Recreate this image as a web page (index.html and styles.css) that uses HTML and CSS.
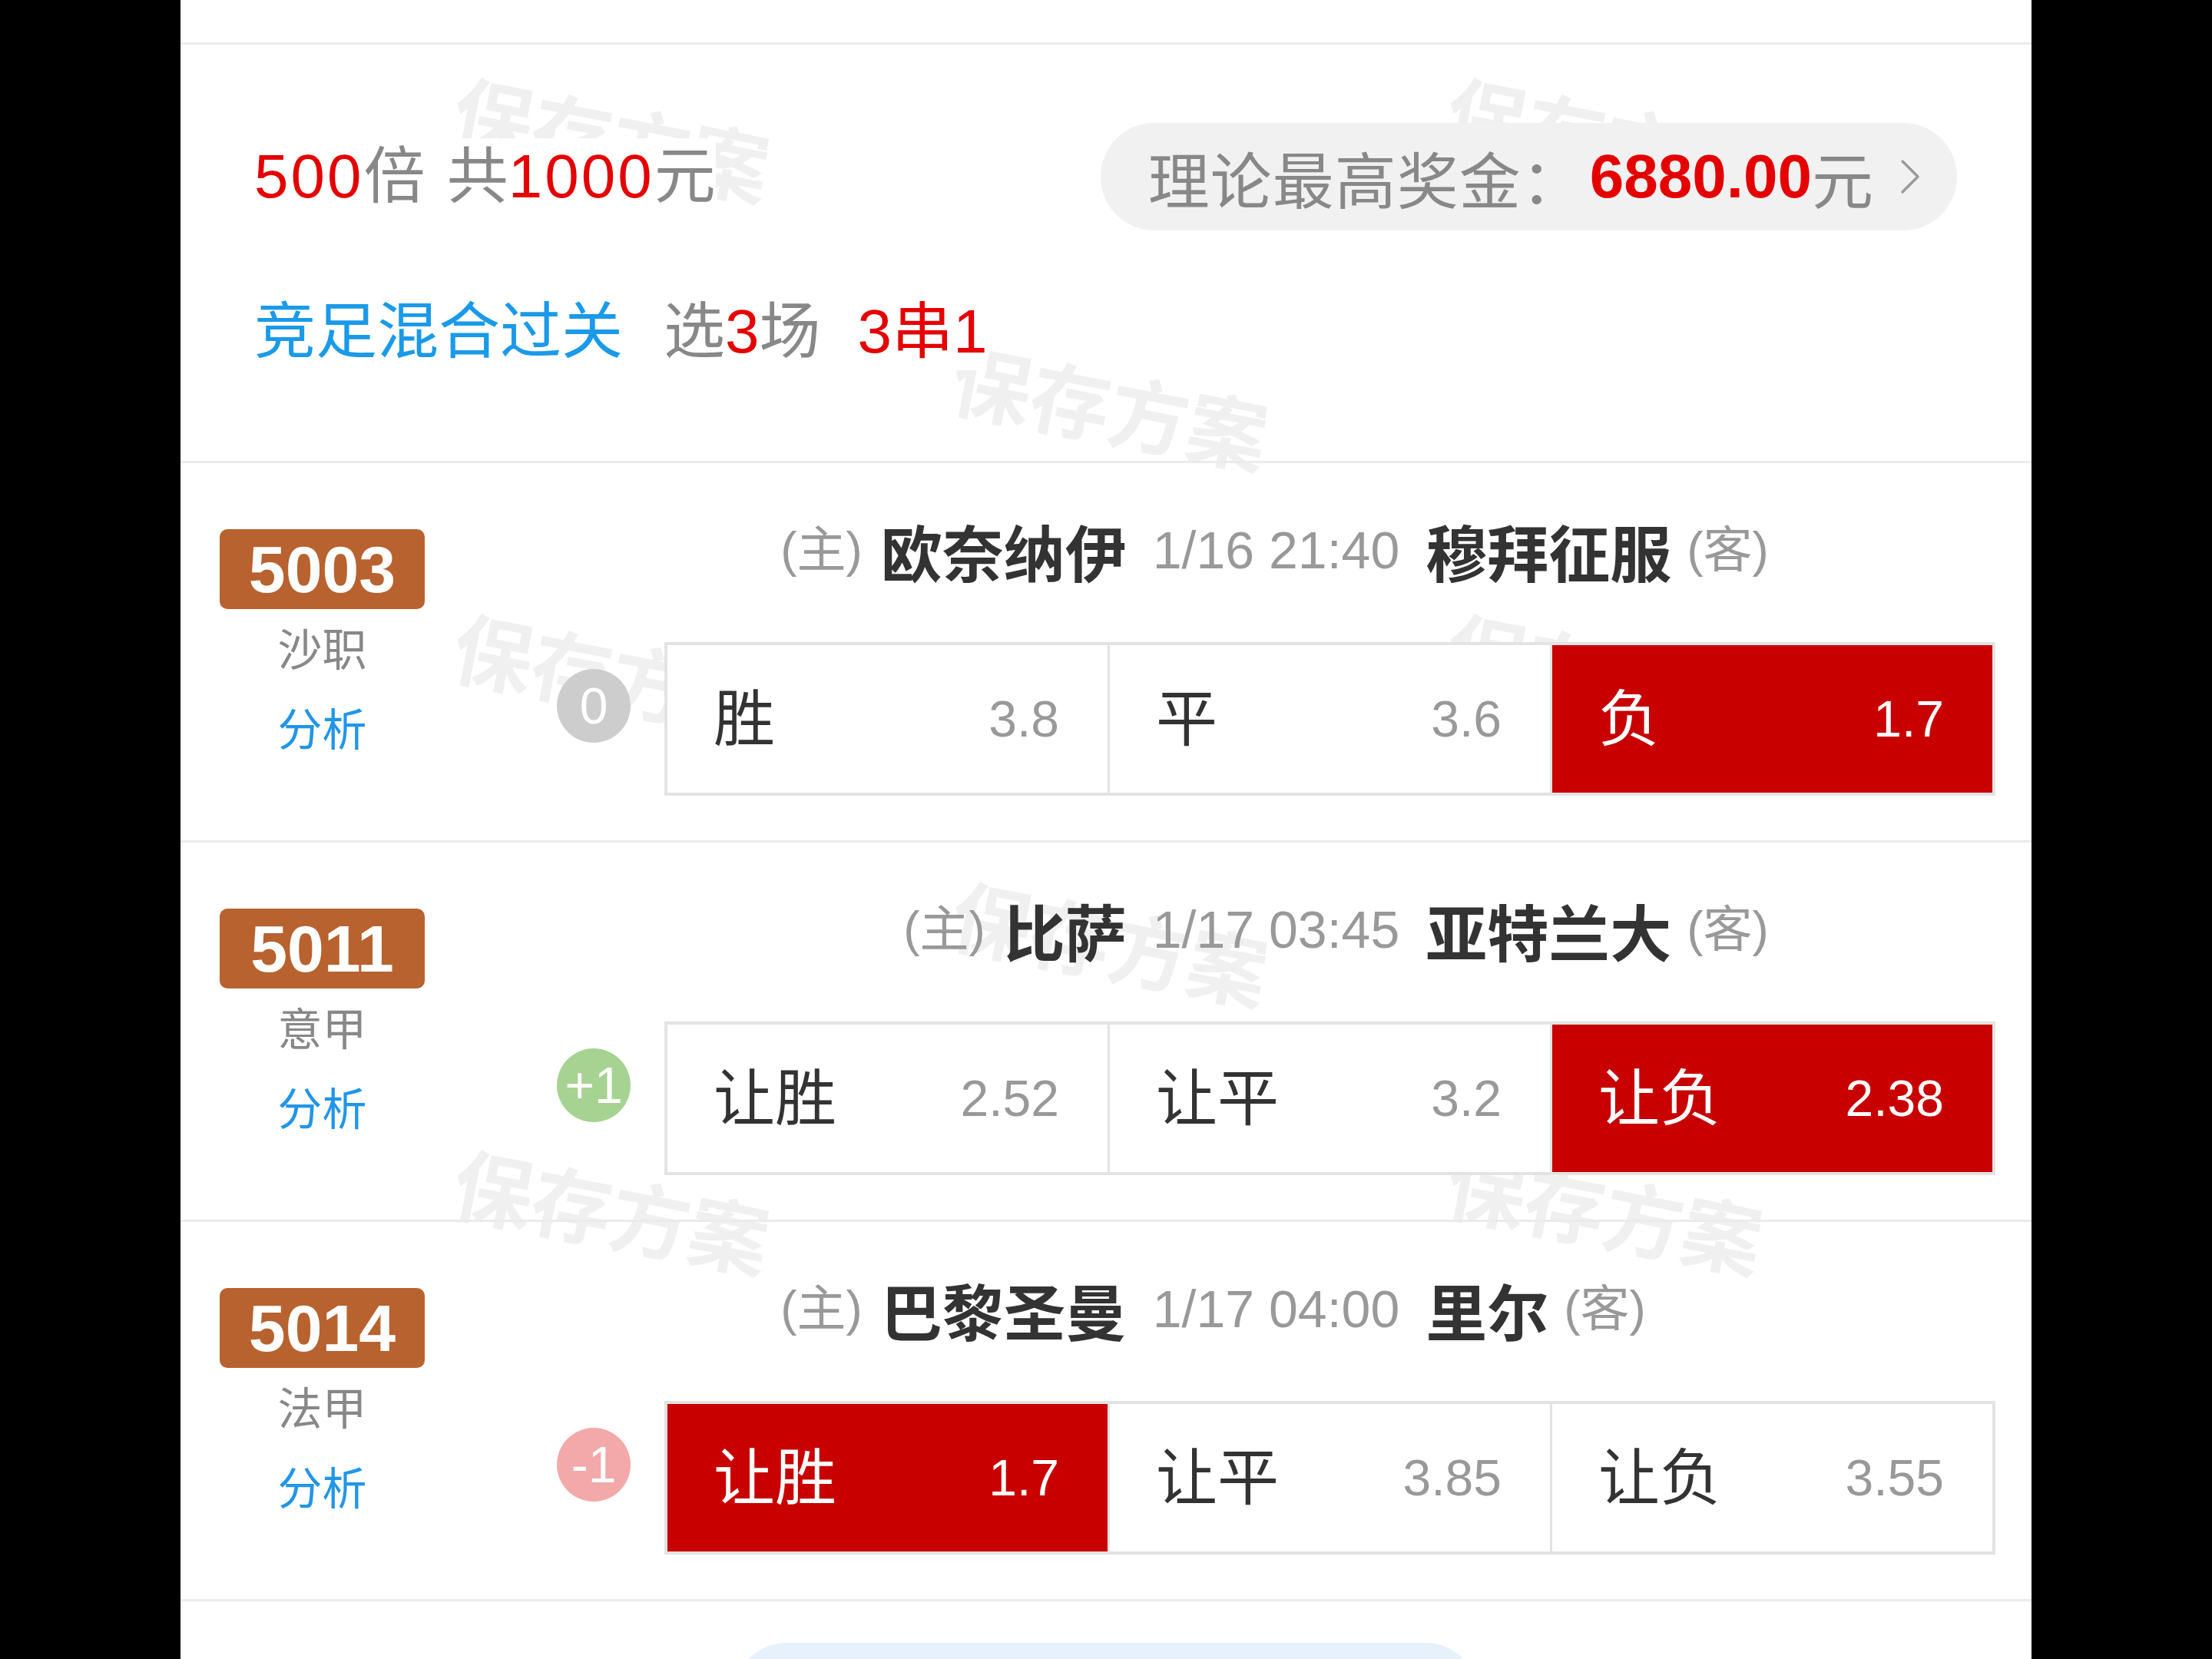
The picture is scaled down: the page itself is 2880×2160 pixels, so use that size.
FILE: index.html
```html
<!DOCTYPE html>
<html lang="zh-CN">
<head>
<meta charset="utf-8">
<title>方案详情</title>
<link rel="stylesheet" href="styles.css">
</head>
<body>
<div class="screen">
  <div class="watermarks" aria-hidden="true">
    <span class="wm wm-l1">保存方案</span>
    <span class="wm wm-l2">保存方案</span>
    <span class="wm wm-l3">保存方案</span>
    <span class="wm wm-m1">保存方案</span>
    <span class="wm wm-m2">保存方案</span>
    <span class="wm wm-m3">保存方案</span>
    <span class="wm wm-r1">保存方案</span>
    <span class="wm wm-r2">保存方案</span>
    <span class="wm wm-r3">保存方案</span>
  </div>

  <div class="content">
    <div class="top-strip"></div>

    <section class="summary">
      <div class="sum-row1">
        <div class="sum-text"><span class="red num">500</span>倍 共<span class="red num">1000</span>元</div>
        <div class="prize-pill">
          <span class="pl">理论最高奖金：</span><span class="amt">6880.00</span><span class="pl">元</span>
          <svg class="chev" viewBox="0 0 30 50" width="30" height="50"><path d="M5 5 L25 25 L5 45" fill="none" stroke="#9a9a9a" stroke-width="3.5" stroke-linecap="round" stroke-linejoin="round"/></svg>
        </div>
      </div>
      <div class="sum-row2">
        <span class="play">竞足混合过关</span>
        <span class="pick">选<span class="red">3</span>场</span>
        <span class="pass red">3串1</span>
      </div>
    </section>

    <section class="match">
      <div class="m-left">
        <div class="badge">5003</div>
        <div class="league">沙职</div>
        <div class="analysis">分析</div>
      </div>
      <div class="m-right">
        <div class="teams">
          <div class="home"><span class="tag">(主)</span><b>欧奈纳伊</b></div>
          <div class="time">1/16 21:40</div>
          <div class="away"><b>穆拜征服</b><span class="tag">(客)</span></div>
        </div>
        <div class="bet-row">
          <div class="hc hc-zero">0</div>
          <div class="odds">
            <div class="cell"><span class="lbl">胜</span><span class="val">3.8</span></div>
            <div class="cell"><span class="lbl">平</span><span class="val">3.6</span></div>
            <div class="cell on"><span class="lbl">负</span><span class="val">1.7</span></div>
          </div>
        </div>
      </div>
    </section>

    <section class="match">
      <div class="m-left">
        <div class="badge">5011</div>
        <div class="league">意甲</div>
        <div class="analysis">分析</div>
      </div>
      <div class="m-right">
        <div class="teams">
          <div class="home"><span class="tag">(主)</span><b>比萨</b></div>
          <div class="time">1/17 03:45</div>
          <div class="away"><b>亚特兰大</b><span class="tag">(客)</span></div>
        </div>
        <div class="bet-row">
          <div class="hc hc-plus">+1</div>
          <div class="odds">
            <div class="cell"><span class="lbl">让胜</span><span class="val">2.52</span></div>
            <div class="cell"><span class="lbl">让平</span><span class="val">3.2</span></div>
            <div class="cell on"><span class="lbl">让负</span><span class="val">2.38</span></div>
          </div>
        </div>
      </div>
    </section>

    <section class="match">
      <div class="m-left">
        <div class="badge">5014</div>
        <div class="league">法甲</div>
        <div class="analysis">分析</div>
      </div>
      <div class="m-right">
        <div class="teams">
          <div class="home"><span class="tag">(主)</span><b>巴黎圣曼</b></div>
          <div class="time">1/17 04:00</div>
          <div class="away"><b>里尔</b><span class="tag">(客)</span></div>
        </div>
        <div class="bet-row">
          <div class="hc hc-minus">-1</div>
          <div class="odds">
            <div class="cell on"><span class="lbl">让胜</span><span class="val">1.7</span></div>
            <div class="cell"><span class="lbl">让平</span><span class="val">3.85</span></div>
            <div class="cell"><span class="lbl">让负</span><span class="val">3.55</span></div>
          </div>
        </div>
      </div>
    </section>

    <div class="footer"><div class="footer-btn"></div></div>
  </div>
</div>
</body>
</html>
```

FILE: styles.css
```css
html, body {
  margin: 0;
  padding: 0;
  height: 2160px;
  overflow: hidden;
  background: #000;
}

body {
  font-family: "Liberation Sans", "Noto Sans CJK SC", sans-serif;
  color: #333;
}

.screen {
  position: relative;
  width: 2410px;
  height: 2160px;
  margin-left: 235px;
  background: #fff;
  overflow: hidden;
}

/* ---------- watermarks ---------- */
.watermarks {
  position: absolute;
  inset: 0;
  z-index: 0;
  pointer-events: none;
}

.wm {
  position: absolute;
  font-family: "Noto Sans CJK SC", sans-serif;
  font-weight: 700;
  font-size: 104px;
  line-height: 1;
  color: #f0f0f0;
  white-space: nowrap;
  transform: translate(-50%, -50%) rotate(11deg);
}

.wm-l1 { left: 562px; top: 178px; }
.wm-l2 { left: 562px; top: 876px; }
.wm-l3 { left: 562px; top: 1574px; }
.wm-m1 { left: 1211px; top: 527px; }
.wm-m2 { left: 1211px; top: 1225px; }
.wm-m3 { left: 1211px; top: 1923px; }
.wm-r1 { left: 1855px; top: 178px; }
.wm-r2 { left: 1855px; top: 876px; }
.wm-r3 { left: 1855px; top: 1574px; }

.content {
  position: relative;
  z-index: 1;
}

.top-strip {
  height: 55px;
  border-bottom: 3px solid #ebebeb;
}

/* ---------- summary ---------- */
.summary {
  padding: 102px 97px 118px 96px;
  border-bottom: 3px solid #ebebeb;
}

.red { color: #e50000; }

.sum-row1 {
  display: flex;
  justify-content: space-between;
  align-items: center;
  height: 140px;
}

.sum-text {
  font-size: 80px;
  line-height: 100px;
  color: #888;
  background: #fff;
  word-spacing: 6px;
}

.num { letter-spacing: 3px; }

.prize-pill {
  display: flex;
  align-items: center;
  height: 140px;
  padding: 0 46px 0 62px;
  border-radius: 70px;
  background: #f1f1f1;
  font-size: 80px;
  color: #888;
}

.prize-pill .pl { letter-spacing: 1px; }

.prize-pill .amt {
  color: #e50000;
  font-weight: 700;
  margin-left: 8px;
}

.prize-pill .chev {
  margin-left: 32px;
  flex: none;
}

.sum-row2 {
  display: flex;
  align-items: center;
  margin-top: 82px;
  font-size: 80px;
  line-height: 100px;
}

.sum-row2 > span { background: #fff; }

.play { color: #1a9ae8; }
.pick { color: #888; margin-left: 53px; }
.pass { margin-left: 48px; }

/* ---------- match rows ---------- */
.match {
  display: grid;
  grid-template-columns: 369px 1fr;
  column-gap: 121px;
  padding-right: 47px;
  height: 491px;
  border-bottom: 3px solid #ebebeb;
}

.m-left {
  display: flex;
  flex-direction: column;
  align-items: center;
  padding-top: 86px;
}

.badge {
  width: 267px;
  height: 104px;
  border-radius: 10px;
  background: #b8622f;
  color: #fff;
  font-weight: 700;
  font-size: 86px;
  line-height: 104px;
  text-align: center;
}

.league {
  margin-top: 2px;
  font-size: 58px;
  line-height: 104px;
  color: #888;
}

.analysis {
  font-size: 58px;
  line-height: 104px;
  color: #2196e8;
}

.m-right {
  padding-top: 63px;
}

.teams {
  display: grid;
  grid-template-columns: 1fr auto 1fr;
  column-gap: 34px;
  align-items: center;
  height: 100px;
  line-height: 100px;
}

.home, .away {
  display: flex;
  align-items: center;
  gap: 24px;
}

.home { justify-self: end; }
.away { justify-self: start; gap: 20px; }

.teams b {
  font-family: "Noto Sans CJK SC", sans-serif;
  font-weight: 700;
  font-size: 80px;
  color: #333;
}

.tag {
  font-size: 64px;
  color: #999;
}

.time {
  font-size: 68px;
  color: #999;
}

.bet-row {
  display: flex;
  align-items: flex-start;
  gap: 44px;
  margin-top: 70px;
}

.hc {
  flex: none;
  width: 96px;
  height: 96px;
  margin-top: 35px;
  border-radius: 50%;
  display: flex;
  align-items: center;
  justify-content: center;
  color: #fff;
  font-size: 66px;
}

.hc-zero { background: #cdcdcd; }
.hc-plus { background: #a6d392; }
.hc-minus { background: #f3a9a9; }

.odds {
  flex: 1;
  display: grid;
  grid-template-columns: repeat(3, 1fr);
  gap: 3px;
  height: 200px;
  box-sizing: border-box;
  border: 4px solid #e3e3e3;
  background: #e3e3e3;
}

.cell {
  display: flex;
  align-items: center;
  justify-content: space-between;
  padding: 0 63px 0 60px;
  background: #fff;
}

.lbl {
  font-size: 80px;
  color: #333;
  padding-bottom: 14px;
}

.val {
  font-size: 66px;
  color: #999;
}

.cell.on { background: #c80000; }
.cell.on .lbl, .cell.on .val { color: #fff; }

/* ---------- footer ---------- */
.footer {
  display: flex;
  justify-content: center;
  padding-top: 54px;
}

.footer-btn {
  width: 964px;
  height: 130px;
  border-radius: 65px;
  background: #e6f1fb;
}
```
